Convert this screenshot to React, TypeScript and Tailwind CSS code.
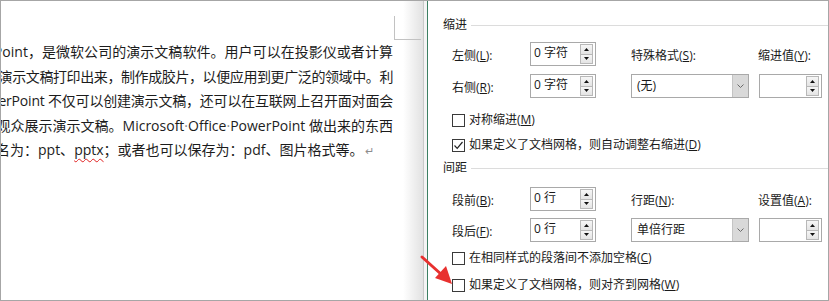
import React from "react";

function Tri({ up }: { up?: boolean }) {
  return (
    <svg width="5" height="3" viewBox="0 0 5 3">
      {up ? <polygon points="0,3 5,3 2.5,0" fill="#111" /> : <polygon points="0,0 5,0 2.5,3" fill="#111" />}
    </svg>
  );
}

function SpinBtns() {
  return (
    <div className="ml-auto mr-[2px] flex flex-col self-stretch py-[1px]">
      <div className="flex-1 w-[13px] border border-[#b8b8b8] bg-gradient-to-b from-[#f6f6f6] to-[#e4e4e4] flex items-center justify-center">
        <Tri up />
      </div>
      <div className="flex-1 w-[13px] border border-[#b8b8b8] border-t-0 bg-gradient-to-b from-[#f6f6f6] to-[#e4e4e4] flex items-center justify-center">
        <Tri />
      </div>
    </div>
  );
}

function Spin({ value, w }: { value: string; w: string }) {
  return (
    <div className={`h-[24px] ${w} border border-[#a9a9a9] bg-white flex items-center`}>
      <span className="pl-[3px] text-[12px] leading-[16px] text-[#1a1a1a] -mt-[2px]">{value}</span>
      <SpinBtns />
    </div>
  );
}

function Drop({ value }: { value: string }) {
  return (
    <div className="h-[24px] w-[118px] border border-[#a9a9a9] bg-white flex">
      <span className="pl-[5px] flex-1 flex items-center text-[12px] text-[#1a1a1a]">{value}</span>
      <div className="w-[16px] bg-[#d9d9d9] border-l border-[#c4c4c4] flex items-center justify-center">
        <svg width="7" height="4" viewBox="0 0 7 4">
          <polyline points="0.5,0.5 3.5,3.5 6.5,0.5" fill="none" stroke="#6a6a6a" strokeWidth="1" />
        </svg>
      </div>
    </div>
  );
}

function Check({ checked, children }: { checked?: boolean; children: React.ReactNode }) {
  return (
    <div className="flex items-center h-[16px] pl-[24px]">
      <div className="w-[13px] h-[13px] border border-[#3a3a3a] bg-white flex items-center justify-center">
        {checked && (
          <svg width="11" height="11" viewBox="0 0 11 11">
            <polyline points="1.5,5.5 4.2,8.3 9.5,2" fill="none" stroke="#222" strokeWidth="1.2" />
          </svg>
        )}
      </div>
      <span className="ml-[4px] text-[12px] text-[#1a1a1a]">{children}</span>
    </div>
  );
}

function Header({ children }: { children: React.ReactNode }) {
  return (
    <div className="flex items-center h-[16px] pl-[15px]">
      <span className="text-[12px] text-[#1a1a1a]">{children}</span>
      <div className="flex-1 h-px bg-[#dcdcdc] ml-[4px]" />
    </div>
  );
}

function Label({ children }: { children: React.ReactNode }) {
  return <span className="text-[12px] text-[#1a1a1a]">{children}</span>;
}

const Dot = () => <span className="text-[#888]">·</span>;

export default function App() {
  return (
    <div className="relative w-[829px] h-[301px] border border-[#a6a6a6] bg-white flex overflow-hidden font-['Open_Sans','Noto_Sans_CJK_SC',sans-serif]">
      {/* Document */}
      <div className="w-[422px] h-full overflow-hidden bg-[linear-gradient(to_right,#ffffff_402px,#e2e2e2_422px)]">
        <div className="ml-[393px] mt-[15px] w-[27px] h-[24px] border-l border-b border-[#c2c2c2]" />
        <div className="text-[14px] leading-[24.5px] text-[#1c1c1c]">
          <div className="w-[392px] flex justify-end whitespace-nowrap tracking-[0.04px]">
            <span>Microsoft Office PowerPoint，是微软公司的演示文稿软件。用户可以在投影仪或者计算</span>
          </div>
          <div className="w-[392px] flex justify-end whitespace-nowrap tracking-[-0.4px]">
            <span>也可以将演示文稿打印出来，制作成胶片，以便应用到更广泛的领域中。利</span>
          </div>
          <div className="w-[392px] flex justify-end whitespace-nowrap tracking-[-0.2px]">
            <span>用Microsoft Office PowerPoint 不仅可以创建演示文稿，还可以在互联网上召开面对面会</span>
          </div>
          <div className="w-[392px] flex justify-end whitespace-nowrap">
            <span>
              网上给观众展示演示文稿。Microsoft<Dot />Office<Dot />PowerPoint 做出来的东西
            </span>
          </div>
          <div className="ml-[-19px] whitespace-nowrap">
            <span>
              缀名为：ppt、
              <span className="underline decoration-wavy decoration-[#e02020] decoration-[1px] underline-offset-[3px]">pptx</span>
              ；或者也可以保存为：pdf、图片格式等。
              <span className="ml-[2px] text-[11px] text-[#8c8c8c]">↵</span>
            </span>
          </div>
        </div>
      </div>
      <div className="w-px h-full bg-[#c9c9c9]" />
      <div className="w-[3px] h-full bg-[#f4f4f4]" />
      <div className="w-px h-full bg-[#3c7f62]" />

      {/* Dialog */}
      <div className="flex-1 h-full bg-white flex flex-col pt-[16px]">
        <Header>缩进</Header>
        <div className="flex items-center pl-[24px] mt-[9px]">
          <div className="w-[78px]"><Label>左侧(<u>L</u>):</Label></div>
          <Spin value="0 字符" w="w-[66px]" />
          <div className="ml-[35px] w-[118px]"><Label>特殊格式(<u>S</u>):</Label></div>
          <div className="ml-[9px]"><Label>缩进值(<u>Y</u>):</Label></div>
        </div>
        <div className="flex items-center pl-[24px] mt-[8px]">
          <div className="w-[78px]"><Label>右侧(<u>R</u>):</Label></div>
          <Spin value="0 字符" w="w-[66px]" />
          <div className="ml-[35px]"><Drop value="(无)" /></div>
          <div className="ml-[10px]"><Spin value="" w="w-[63px]" /></div>
        </div>
        <div className="mt-[14px]">
          <Check>对称缩进(<u>M</u>)</Check>
        </div>
        <div className="mt-[9px]">
          <Check checked>如果定义了文档网格，则自动调整右缩进(<u>D</u>)</Check>
        </div>
        <div className="mt-[7px]">
          <Header>间距</Header>
        </div>
        <div className="flex items-center pl-[24px] mt-[11px]">
          <div className="w-[78px]"><Label>段前(<u>B</u>):</Label></div>
          <Spin value="0 行" w="w-[66px]" />
          <div className="ml-[35px] w-[118px]"><Label>行距(<u>N</u>):</Label></div>
          <div className="ml-[9px]"><Label>设置值(<u>A</u>):</Label></div>
        </div>
        <div className="flex items-center pl-[24px] mt-[7px]">
          <div className="w-[78px]"><Label>段后(<u>F</u>):</Label></div>
          <Spin value="0 行" w="w-[66px]" />
          <div className="ml-[35px]"><Drop value="单倍行距" /></div>
          <div className="ml-[10px]"><Spin value="" w="w-[63px]" /></div>
        </div>
        <div className="mt-[8px]">
          <Check>在相同样式的段落间不添加空格(<u>C</u>)</Check>
        </div>
        <div className="mt-[11px]">
          <Check>如果定义了文档网格，则对齐到网格(<u>W</u>)</Check>
        </div>
      </div>

      {/* Red annotation arrow */}
      <svg className="absolute left-0 top-0 pointer-events-none" width="829" height="301" viewBox="0 0 829 301">
        <line x1="421" y1="256" x2="441" y2="274" stroke="#e8312f" strokeWidth="3" strokeLinecap="round" />
        <polygon points="451,283 434,277 445,265" fill="#e8312f" />
      </svg>
    </div>
  );
}
